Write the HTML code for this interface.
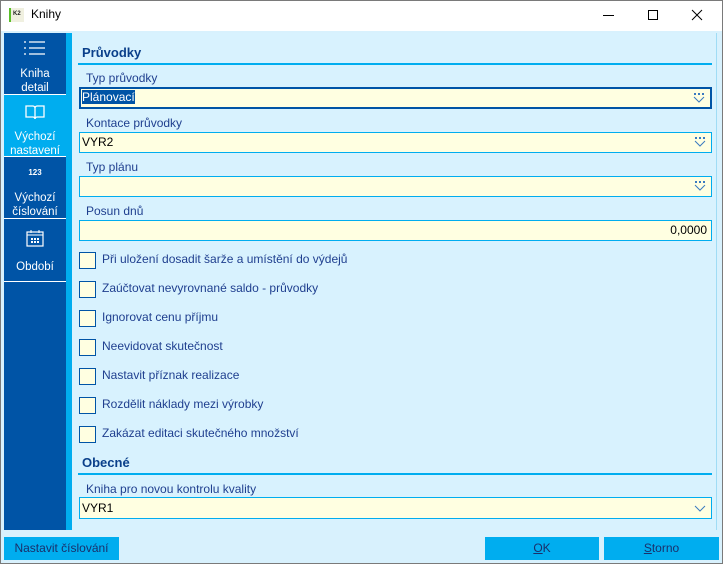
<!DOCTYPE html>
<html><head><meta charset="utf-8"><style>
*{box-sizing:border-box;margin:0;padding:0}
body{width:723px;height:564px;overflow:hidden;font-family:"Segoe UI","Liberation Sans","DejaVu Sans",sans-serif;font-size:12px;position:relative;background:#d8f1fd}
.win{position:absolute;left:0;top:0;width:723px;height:564px;background:#d8f1fd}
.frame{position:absolute;left:0;top:0;width:723px;height:564px;border:1px solid #7a7a7a;z-index:5}
.title{position:absolute;left:0;top:0;width:723px;height:31px;background:#fff}
.abs{position:absolute}
.side{position:absolute;left:4px;top:33px;width:62px;height:497px;background:#0054a6}
.item{position:absolute;left:0;width:62px;height:62px;color:#fff;text-align:center;font-size:11.5px;line-height:14px;border-bottom:1px solid #fff}
.stripe{position:absolute;left:66px;top:33px;width:6px;height:497px;background:#00adef}
.panel{position:absolute;left:72px;top:33px;width:645px;height:497px;background:#d8f2fe;border-right:1px solid #9fdcf5}
.h{position:absolute;left:82px;font-weight:bold;color:#0a3f8a;font-size:13px}
.line{position:absolute;left:78px;width:634px;height:2px;background:#00adef}
.lbl{position:absolute;left:86px;color:#1f3f8f;font-size:12px}
.inp{position:absolute;left:79px;width:633px;height:21px;background:#ffffe1;border:1px solid #00adef;color:#000;font-size:12px;padding:2px 2px;line-height:15px}
.cb{position:absolute;left:79px;width:17px;height:17px;background:#ffffe1;border:1px solid #0054a6}
.ct{position:absolute;left:102px;color:#1f3f8f;font-size:12px}
.btn{position:absolute;top:537px;height:23px;background:#00adef;color:#1a2f6a;text-align:center;line-height:23px;font-size:12px}
.dd{position:absolute;right:5px;top:5px}
</style></head><body>
<div class="win">
<div class="title">
 <div class="abs" style="left:9px;top:8px;width:15px;height:14px;background:#f0f0e0;border-left:2px solid #5bbf2a"><div style="font-size:6px;font-weight:bold;color:#222;margin:3px 0 0 2px">K2</div></div>
 <div class="abs" style="left:31px;top:7px;font-size:12px;color:#000">Knihy</div>
 <div class="abs" style="left:603px;top:15px;width:11px;height:1px;background:#000"></div>
 <div class="abs" style="left:648px;top:10px;width:10px;height:10px;border:1px solid #000"></div>
 <svg class="abs" style="left:691px;top:9px" width="12" height="12"><path d="M1 1L11 11M11 1L1 11" stroke="#000" stroke-width="1"/></svg>
</div>
<div class="side">
 <div class="item" style="top:0">
  <svg style="margin-top:8px" width="22" height="14"><g stroke="#fff" stroke-width="1.2"><path d="M0 1h2M5 1h16M0 7h2M5 7h16M0 13h2M5 13h16"/></g></svg>
  <div style="margin-top:8px">Kniha<br>detail</div></div>
 <div class="item" style="top:62px;background:#00adef">
  <svg style="margin-top:9px" width="20" height="16"><path d="M1 2h7c1 0 2 1 2 2v11c0-1-1-2-2-2H1zM19 2h-7c-1 0-2 1-2 2v11c0-1 1-2 2-2h7z" fill="none" stroke="#fff" stroke-width="1.3"/></svg>
  <div style="margin-top:6px">Výchozí<br>nastavení</div></div>
 <div class="item" style="top:124px">
  <div style="margin-top:9px;font-size:8px;font-weight:bold">123</div>
  <div style="margin-top:11px">Výchozí<br>číslování</div></div>
 <div class="item" style="top:186px;height:63px">
  <svg style="margin-top:10px" width="18" height="18"><rect x="1" y="3" width="16" height="14" fill="none" stroke="#fff" stroke-width="1.2"/><path d="M1 6h16M5 1v3M13 1v3" stroke="#fff"/><g fill="#fff"><rect x="5" y="9" width="2" height="2"/><rect x="8" y="9" width="2" height="2"/><rect x="11" y="9" width="2" height="2"/><rect x="5" y="12" width="2" height="2"/><rect x="8" y="12" width="2" height="2"/><rect x="11" y="12" width="2" height="2"/></g></svg>
  <div style="margin-top:9px">Období</div></div>
</div>
<div class="stripe"></div>
<div class="panel"></div>

<div class="h" style="top:45px">Průvodky</div>
<div class="line" style="top:63px"></div>

<div class="lbl" style="top:71px">Typ průvodky</div>
<div class="inp" style="top:87px;height:22px;border:2px solid #0054a6;padding:1px"><span style="background:#0054a6;color:#fff">Plánovací</span>
 <svg class="dd" width="12" height="10" style="top:4px"><g fill="#3a7ac0"><rect x="1" y="0" width="2" height="2"/><rect x="5" y="0" width="2" height="2"/><rect x="9" y="0" width="2" height="2"/></g><path d="M1 4l5 5 5-5" fill="none" stroke="#3a7ac0"/></svg></div>

<div class="lbl" style="top:116px">Kontace průvodky</div>
<div class="inp" style="top:132px">VYR2
 <svg class="dd" width="12" height="10" style="top:4px"><g fill="#3a7ac0"><rect x="1" y="0" width="2" height="2"/><rect x="5" y="0" width="2" height="2"/><rect x="9" y="0" width="2" height="2"/></g><path d="M1 4l5 5 5-5" fill="none" stroke="#3a7ac0"/></svg></div>

<div class="lbl" style="top:160px">Typ plánu</div>
<div class="inp" style="top:176px">
 <svg class="dd" width="12" height="10" style="top:4px"><g fill="#3a7ac0"><rect x="1" y="0" width="2" height="2"/><rect x="5" y="0" width="2" height="2"/><rect x="9" y="0" width="2" height="2"/></g><path d="M1 4l5 5 5-5" fill="none" stroke="#3a7ac0"/></svg></div>

<div class="lbl" style="top:204px">Posun dnů</div>
<div class="inp" style="top:220px;text-align:right;padding-right:4px">0,0000</div>

<div class="cb" style="top:252px"></div><div class="ct" style="top:252px">Při uložení dosadit šarže a umístění do výdejů</div>
<div class="cb" style="top:281px"></div><div class="ct" style="top:281px">Zaúčtovat nevyrovnané saldo - průvodky</div>
<div class="cb" style="top:310px"></div><div class="ct" style="top:310px">Ignorovat cenu příjmu</div>
<div class="cb" style="top:339px"></div><div class="ct" style="top:339px">Neevidovat skutečnost</div>
<div class="cb" style="top:368px"></div><div class="ct" style="top:368px">Nastavit příznak realizace</div>
<div class="cb" style="top:397px"></div><div class="ct" style="top:397px">Rozdělit náklady mezi výrobky</div>
<div class="cb" style="top:426px"></div><div class="ct" style="top:426px">Zakázat editaci skutečného množství</div>

<div class="h" style="top:455px">Obecné</div>
<div class="line" style="top:473px"></div>
<div class="lbl" style="top:482px">Kniha pro novou kontrolu kvality</div>
<div class="inp" style="top:497px;height:22px;padding-top:3px">VYR1
 <svg class="dd" width="12" height="8" style="top:7px"><path d="M1 1l5 5 5-5" fill="none" stroke="#3a7ac0"/></svg></div>

<div class="btn" style="left:4px;width:115px">Nastavit číslování</div>
<div class="btn" style="left:485px;width:114px"><u>O</u>K</div>
<div class="btn" style="left:604px;width:115px"><u>S</u>torno</div>
</div>
<div class="frame"></div>
</body></html>
